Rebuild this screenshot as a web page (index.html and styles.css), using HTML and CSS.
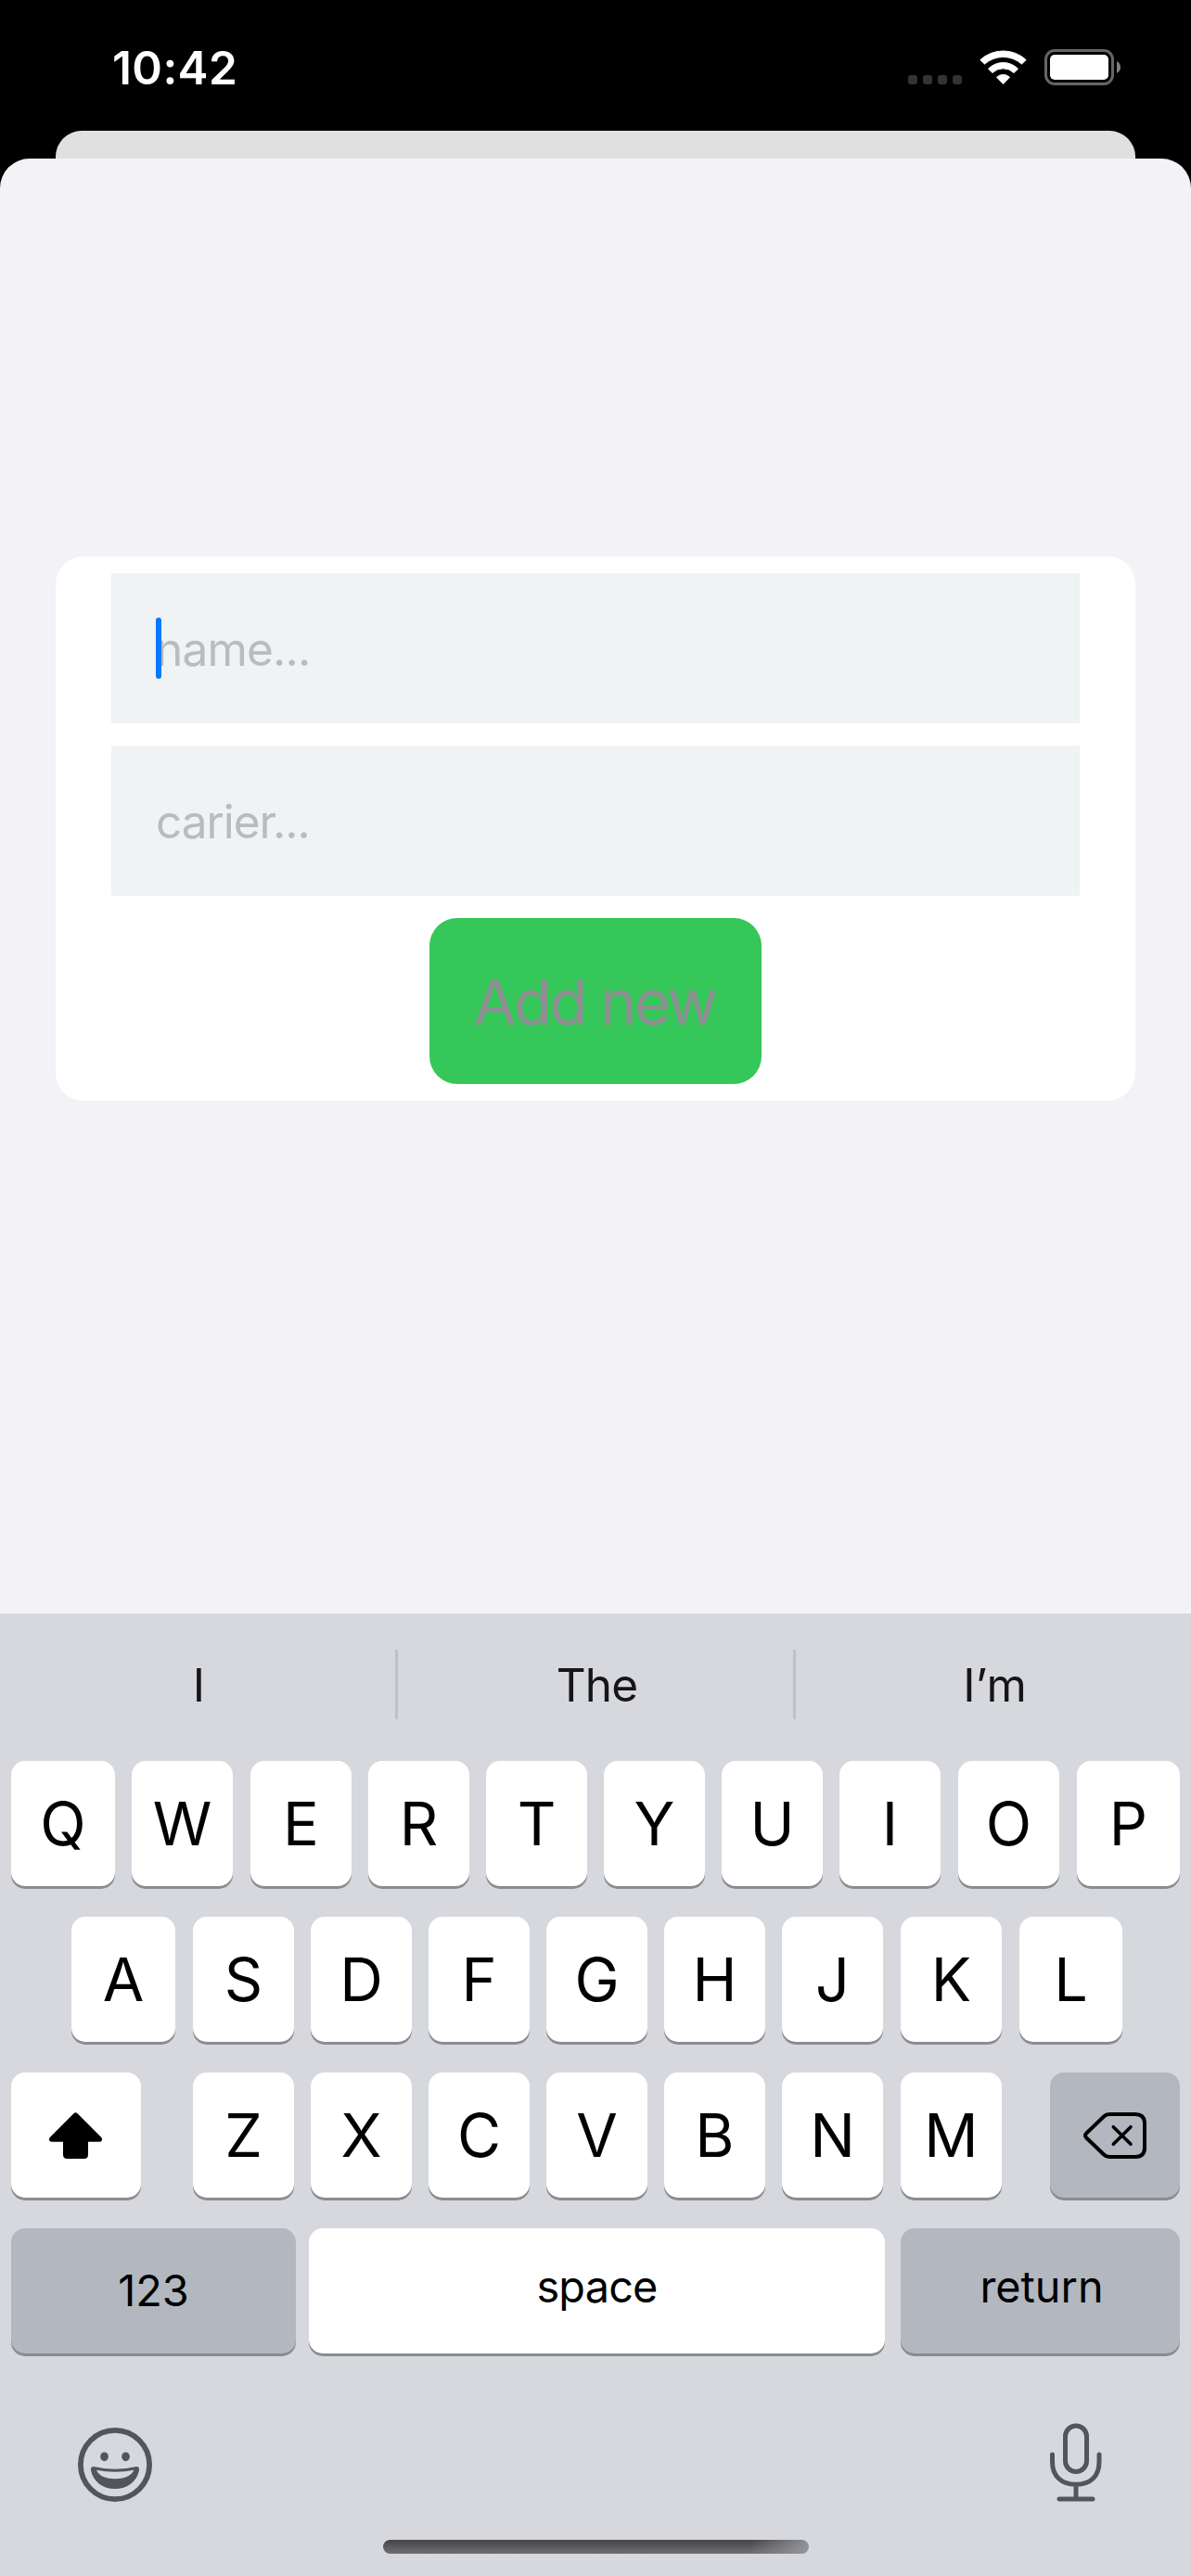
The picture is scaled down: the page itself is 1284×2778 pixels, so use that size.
FILE: index.html
```html
<!DOCTYPE html>
<html lang="en">
<head>
<meta charset="utf-8">
<title>Add new</title>
<link rel="stylesheet" href="styles.css">
</head>
<body>
<div class="screen">
  <header class="status-bar">
    <time class="clock">10:42</time>
    <div class="indicators">
      <div class="signal"><i></i><i></i><i></i><i></i></div>
      <svg class="wifi" width="51" height="37" viewBox="0 0 51 37" fill="#fff" stroke="#fff" stroke-width="1" stroke-linejoin="round">
        <path d="M.8 10.6A36.5 36.5 0 0 1 50.2 10.6L45.5 15.1A29.9 29.9 0 0 0 5.5 15.1Z"/>
        <path d="M9.5 20.2A22.5 22.5 0 0 1 41.5 20.2L37 24.5A16.5 16.5 0 0 0 14 24.5Z"/>
        <path d="M18.5 29.3A10 10 0 0 1 32.5 29.3L25.5 36.4Z"/>
      </svg>
      <svg class="battery" width="82" height="39" viewBox="0 0 82 39">
        <rect x="1.5" y="1.5" width="72" height="36" rx="9.5" fill="none" stroke="#666" stroke-width="3"/>
        <rect x="6" y="6" width="63" height="27" rx="5" fill="#fff"/>
        <path d="M78 13Q82 15.500 82 19.500T78 26Z" fill="#808080"/>
      </svg>
    </div>
  </header>

  <div class="presenter"></div>
  <main class="sheet">
    <form class="card">
      <div class="field"><span class="placeholder name">name...</span><span class="caret"></span></div>
      <div class="field"><span class="placeholder carier">carier...</span></div>
      <div class="submit"><span>Add new</span></div>
    </form>
  </main>

  <section class="keyboard">
    <div class="suggestions">
      <span>I</span><b></b><span class="the">The</span><b></b><span>I’m</span>
    </div>
    <div class="keys">
      <div class="row top">
        <div class="key">Q</div><div class="key">W</div><div class="key">E</div><div class="key">R</div><div class="key">T</div><div class="key">Y</div><div class="key">U</div><div class="key">I</div><div class="key">O</div><div class="key">P</div>
      </div>
      <div class="row home">
        <div class="key">A</div><div class="key">S</div><div class="key">D</div><div class="key">F</div><div class="key">G</div><div class="key">H</div><div class="key">J</div><div class="key">K</div><div class="key">L</div>
      </div>
      <div class="row lower">
        <div class="key">
          <svg class="shift" width="57" height="50" viewBox="0 0 57 50"><path d="M26.700 1Q28.500-.4 30.300 1L56.200 27Q57.600 29 56.700 30.500Q56 31.700 54 31.700H42V45.500Q42 50 37.500 50H19.500Q15 50 15 45.500V31.700H3Q1 31.700.3 30.500Q-.6 29 .8 27Z"/></svg>
        </div>
        <div class="key">Z</div><div class="key">X</div><div class="key">C</div><div class="key">V</div><div class="key">B</div><div class="key">N</div><div class="key">M</div>
        <div class="key dark">
          <svg width="68" height="50" viewBox="0 0 68 50" fill="none" stroke="#000" stroke-width="4" stroke-linecap="round" stroke-linejoin="round"><path d="M28 2H56Q66 2 66 12V38Q66 48 56 48H28Q24.500 48 22 45.500L3 27.200Q1 25 3 22.800L22 4.500Q24.500 2 28 2Z"/><path d="M32.300 15.700L51 34.300M51 15.700L32.300 34.300" stroke-width="3.600"/></svg>
        </div>
      </div>
      <div class="row bottom">
        <div class="key dark num">123</div><div class="key word space">space</div><div class="key dark word return">return</div>
      </div>
    </div>
    <div class="dock">
      <svg width="80" height="80" viewBox="0 0 80 80">
        <circle cx="40" cy="40" r="37.100" fill="none" stroke="#50565c" stroke-width="5.800"/>
        <g fill="#50565c"><ellipse cx="28.500" cy="31.300" rx="4.300" ry="4.900"/><ellipse cx="51.500" cy="31.300" rx="4.300" ry="4.900"/>
        <path fill-rule="evenodd" d="M17 42Q40 47.500 63 42Q66.600 42 66 46C63.500 58.500 53 66 40 66S16.500 58.500 14 46Q13.400 42 17 42ZM20 45.700C22.500 52.300 31 55.200 40 55.200S57.500 52.300 60.500 45.700Q40 49.800 20 45.700Z"/></g>
      </svg>
      <svg width="56" height="85" viewBox="0 0 56 85" fill="none" stroke="#50565c" stroke-width="5" stroke-linecap="round">
        <rect x="16.500" y="3" width="23" height="49.500" rx="11.500"/>
        <path d="M2.500 34V42C2.500 57 12 66.300 28 66.300S53 57 53 42V34M28 66.300V82M10 82H46"/>
      </svg>
    </div>
    <div class="home-indicator"></div>
  </section>
</div>
</body>
</html>
```
FILE: styles.css
```css
* { box-sizing: border-box; }
body { margin: 0; background: #000; font-family: Inter, "Liberation Sans", sans-serif; }
svg { display: block; flex: none; }

.screen { width: 1284px; height: 2778px; display: flex; flex-direction: column; overflow: hidden; background: #000; }

.status-bar { height: 141px; padding: 0 76px 0 121px; display: flex; justify-content: space-between; }
.clock { margin-top: 43px; line-height: 60px; font-size: 49.500px; font-weight: 600; letter-spacing: .4px; color: #fff; }
.indicators { display: flex; align-items: flex-start; padding-top: 53px; }
.signal { display: flex; gap: 6px; margin: 28px 19px 0 0; }
.signal i { width: 10px; height: 10px; border-radius: 3px; background: #333; }
.wifi { margin: 1px 19px 0 0; }

.presenter { height: 30px; margin: 0 60px; background: #e0e0e0; border-radius: 28px 28px 0 0; }
.sheet { height: 1569px; padding: 429px 60px 0; background: #f3f2f7; border-radius: 32px 32px 0 0; }
.card { height: 587px; padding: 18px 60px; display: flex; flex-direction: column; gap: 24px; align-items: center; background: #fff; border-radius: 30px; }
.field { position: relative; width: 1044px; height: 162px; padding: 1px 0 0 48px; display: flex; align-items: center; background: #eff3f4; }
.placeholder { font-size: 49.500px; line-height: 60px; color: #b8bcbe; }
.name { letter-spacing: -.8px; }
.carier { letter-spacing: -1.050px; }
.caret { position: absolute; left: 48px; top: 48px; width: 6px; height: 66px; border-radius: 3px; background: #007aff; }
.submit { width: 358px; height: 179px; padding: 1px 0 0 0; display: flex; align-items: center; justify-content: center; background: #35c759; border-radius: 30px; font-size: 67px; letter-spacing: -2.600px; color: #8e8e93; white-space: nowrap; }
.submit span { margin-right: 2px; }

.keyboard { flex: 1; display: flex; flex-direction: column; background: #d7d8dd; }
.suggestions { height: 153px; display: grid; grid-template-columns: 426px 3px 426px 3px 426px; align-items: center; text-align: center; font-size: 49.500px; color: #161616; }
.suggestions span { padding-left: 3px; }
.suggestions b { height: 75px; background: #c0c1c6; }
.suggestions .the { letter-spacing: -.8px; }
.keys { display: flex; flex-direction: column; gap: 33px; padding: 6px 12px 0; }
.row { display: grid; height: 135px; }
/* Each track holds a key and the gap to its right. */
.top { grid-template-columns: 130px 128px 127px 127px 127px 127px 127px 128px 128px 111px; }
.home { grid-template-columns: 131px 127px 127px 127px 127px 127px 128px 128px 111px; padding-left: 65px; }
.lower { grid-template-columns: 196px 127px 127px 127px 127px 127px 128px 161px 140px; }
.bottom { grid-template-columns: 321px 638px 301px; }
.key { width: 109px; height: 135px; display: flex; align-items: center; justify-content: center; border-radius: 15px; background: #fff; box-shadow: 0 3px 0 #8b8c90; font-size: 64.600px; color: #000; }
.top .key:first-child, .home .key:first-child { width: 112px; }
.top .key:last-child, .home .key:last-child { width: 111px; }
.lower .key:first-child, .lower .key:last-child { width: 140px; }
.shift { margin-right: 1px; }
.key.dark { background: #b3b7c0; }
.key.num { width: 307px; padding-bottom: 1px; font-size: 46.800px; }
.key.word { padding-bottom: 9px; font-size: 46.800px; }
.key.space { width: 621px; letter-spacing: -.8px; }
.key.return { width: 301px; padding-left: 3px; }
.dock { display: flex; justify-content: space-between; align-items: flex-start; padding: 0 96px 0 84px; margin-top: 75px; }
.dock svg:first-child { margin-top: 5px; }
.home-indicator { width: 459px; height: 15px; margin: 41px auto 0 413px; border-radius: 8px; background: linear-gradient(110deg, transparent 86%, #96979b), linear-gradient(#464648, #707073); }
```
